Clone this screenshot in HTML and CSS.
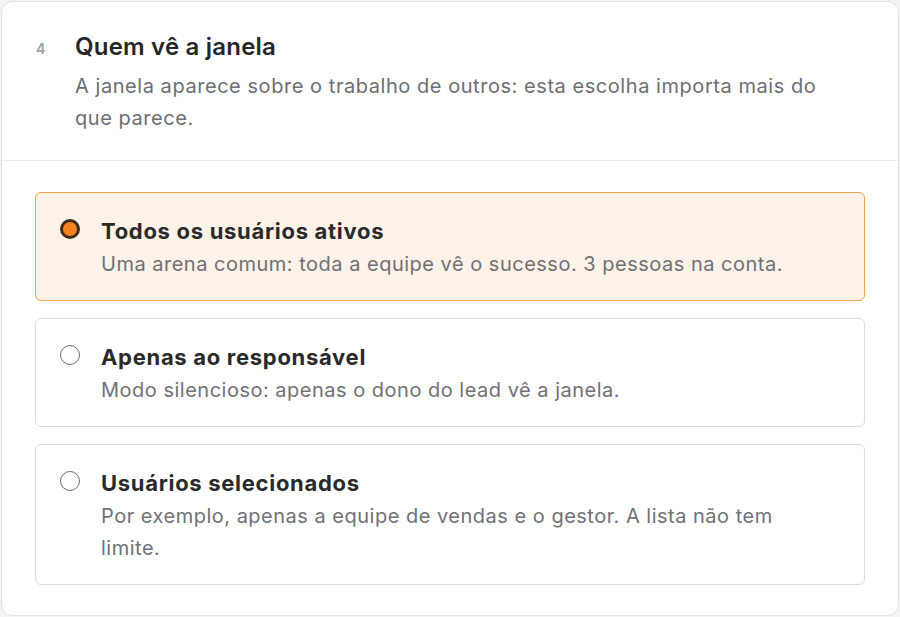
FILE: index.html
```html
<!DOCTYPE html>
<html lang="pt-BR">
<head>
<meta charset="utf-8">
<title>Quem vê a janela</title>
<link rel="stylesheet" href="styles.css">
</head>
<body>
<section class="card">
  <header class="card-head">
    <span class="step">4</span>
    <div class="head-text">
      <h2 class="title">Quem vê a janela</h2>
      <p class="desc">A janela aparece sobre o trabalho de outros: esta escolha importa mais do que parece.</p>
    </div>
  </header>
  <div class="options">
    <label class="option selected">
      <span class="radio checked"></span>
      <span class="opt-text">
        <span class="opt-title">Todos os usuários ativos</span>
        <span class="opt-desc">Uma arena comum: toda a equipe vê o sucesso. 3 pessoas na conta.</span>
      </span>
    </label>
    <label class="option">
      <span class="radio"></span>
      <span class="opt-text">
        <span class="opt-title">Apenas ao responsável</span>
        <span class="opt-desc">Modo silencioso: apenas o dono do lead vê a janela.</span>
      </span>
    </label>
    <label class="option">
      <span class="radio"></span>
      <span class="opt-text">
        <span class="opt-title">Usuários selecionados</span>
        <span class="opt-desc">Por exemplo, apenas a equipe de vendas e o gestor. A lista não tem limite.</span>
      </span>
    </label>
  </div>
</section>
</body>
</html>
```

FILE: styles.css
```css
* { box-sizing: border-box; }
html, body { margin: 0; padding: 0; background: #f3f3f3; }
body {
  font-family: Inter, "Noto Sans", "Liberation Sans", sans-serif;
  color: #2b2b2b;
  padding: 1px 1px 0 1px;
}
.card {
  background: #fff;
  border: 1px solid #e3e3e3;
  border-radius: 12px;
  height: 615px;
}
.card-head {
  display: flex;
  align-items: flex-start;
  padding: 29px 40px 26px 34px;
  border-bottom: 1px solid #ebebeb;
}
.step {
  width: 39px;
  flex: none;
  font-size: 14px;
  font-weight: 700;
  color: #a3a7ad;
  line-height: 36px;
}
.head-text {
  max-width: 770px;
}
.title {
  margin: 0 0 7px;
  font-size: 24px;
  font-weight: 600;
  line-height: 32px;
  color: #262626;
  letter-spacing: 0.2px;
}
.desc {
  margin: 0;
  font-size: 20px;
  line-height: 32px;
  color: #6e6e73;
  letter-spacing: 0.55px;
}
.options {
  display: flex;
  flex-direction: column;
  gap: 17px;
  padding: 31px 33px 30px 33px;
}
.option {
  display: flex;
  align-items: flex-start;
  gap: 21px;
  padding: 23px 52px 20px 24px;
  border: 1px solid #dcdcdc;
  border-radius: 6px;
  background: #fff;
}
.option.selected {
  background: #fdf2e7;
  border-color: #f0a050;
}
.radio {
  flex: none;
  width: 20px;
  height: 20px;
  margin-top: 3px;
  border-radius: 50%;
  border: 1.5px solid #6b6b6b;
  background: #fff;
}
.radio.checked {
  border: 3px solid #3f2b1b;
  background: #f5841f;
}
.opt-text {
  display: flex;
  flex-direction: column;
}
.opt-title {
  font-size: 22px;
  font-weight: 700;
  line-height: 30px;
  color: #2a2a2a;
  letter-spacing: 0.7px;
  margin-bottom: 2px;
}
.opt-desc {
  font-size: 20px;
  line-height: 32px;
  color: #717176;
  letter-spacing: 0.5px;
}
```
